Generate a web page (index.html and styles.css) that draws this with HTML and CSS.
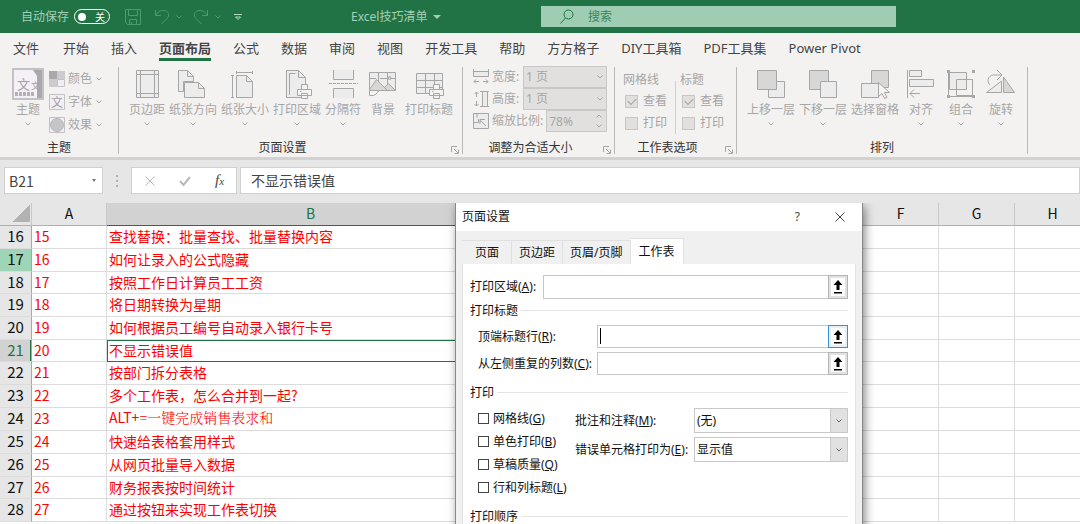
FILE: index.html
```html
<!DOCTYPE html>
<html lang="zh-CN">
<head>
  <meta charset="UTF-8">
  <meta name="viewport" content="width=device-width, initial-scale=1.0">
  <title>Excel技巧清单</title>
  <link rel="stylesheet" href="styles.css">
</head>
<body>
  <!-- shared icons -->
  <svg class="sprite" aria-hidden="true">
    <symbol id="chev" viewBox="0 0 8 6"><path d="M1.5 1.5 4 4 6.500 1.500"/></symbol>
    <symbol id="printer" viewBox="0 0 16 16"><path class="paper" d="M4.500 5.500V.500h6v5M.500 5.500h14v6h-14zM4.500 9.500h6v5h-6z"/><path d="M3 7.500h1.500"/></symbol>
    <symbol id="launch" viewBox="0 0 8 8"><path d="M.500 6V.500H6M3 3l4 4M7.500 3.500v4h-4"/></symbol>
    <symbol id="pick" viewBox="0 0 10 14"><path class="solid" d="M5 0 9.500 5H6.500v5h-3V5H.500zM1 12h8v1.500H1z"/></symbol>
  </svg>

  <header class="title-bar">
    <div class="quick-access">
      <span>自动保存</span>
      <button class="toggle" type="button"><i></i>关</button>
      <button class="quick" type="button" aria-label="保存"><svg width="16" height="16"><path d="M.500.500h15v15h-13l-2-2zM3.500.500v6h9v-6M4.500 15.500v-5h7v5M6.500 13v2"/></svg></button>
      <button class="quick" type="button" aria-label="撤消"><svg width="16" height="16"><path d="M1.500 1v5.500H7M1.500 6.500C4 3 6 1.500 9 1.500c6 0 7 5 4 8L7.500 15"/></svg><svg class="chev"><use href="#chev"/></svg></button>
      <button class="quick" type="button" aria-label="恢复"><svg width="16" height="16"><path d="M14.500 1v5.500H9M14.500 6.500C12 3 10 1.500 7 1.500c-6 0-7 5-4 8L8.500 15"/></svg><svg class="chev"><use href="#chev"/></svg></button>
      <button class="quick customize" type="button" aria-label="自定义"><svg width="8" height="8"><path d="M0 1.500h8M1.500 4 4 6.500 6.500 4z"/></svg></button>
    </div>
    <button class="file-name" type="button">Excel技巧清单<i></i></button>
    <label class="search">
      <svg width="14" height="15"><circle cx="8.500" cy="5.500" r="4.500"/><path d="M5.500 9 .500 14.500"/></svg>
      <input type="text" placeholder="搜索">
    </label>
  </header>

  <nav class="tabs">
    <a href="#">文件</a>
    <a href="#">开始</a>
    <a href="#">插入</a>
    <a href="#" class="active">页面布局</a>
    <a href="#">公式</a>
    <a href="#">数据</a>
    <a href="#">审阅</a>
    <a href="#">视图</a>
    <a href="#">开发工具</a>
    <a href="#">帮助</a>
    <a href="#">方方格子</a>
    <a href="#">DIY工具箱</a>
    <a href="#">PDF工具集</a>
    <a href="#">Power Pivot</a>
  </nav>

  <div class="ribbon">
    <section class="group theme-group">
      <div class="group-body">
        <button class="tool theme" type="button">
          <svg width="32" height="32"><path class="frame" d="M1 1h30v30H1z"/><path class="dark" d="M25 2h5v28h-5z"/><path class="dark" d="M21 2h4v6z"/><path class="dots" d="M3 26h20"/><text x="5" y="21" font-size="13">文</text><text x="19" y="21" font-size="9">文</text></svg>
          <span>主题</span><svg class="chev"><use href="#chev"/></svg>
        </button>
        <div class="small-tools">
          <button type="button"><svg width="16" height="16"><path class="dark" d="M0 0h8v8H0z"/><path class="fill-mid" d="M8 0h8v8H8zM0 8h8v8H0z"/><path class="lilac" d="M8.500 8.500h7v7h-7z"/></svg>颜色<svg class="chev"><use href="#chev"/></svg></button>
          <button type="button"><svg width="16" height="16"><path class="lilac" d="M.500.500h15v15H.500z"/><text x="2" y="13" font-size="12">文</text></svg>字体<svg class="chev"><use href="#chev"/></svg></button>
          <button type="button"><svg width="16" height="16"><path class="lilac" d="M.500.500h15v15H.500z"/><circle class="ball" cx="8" cy="8" r="6.500"/></svg>效果<svg class="chev"><use href="#chev"/></svg></button>
        </div>
      </div>
      <h2>主题</h2>
    </section>

    <section class="group setup-group">
      <div class="group-body">
        <button class="tool" type="button"><svg width="32" height="32"><path class="pale" d="M5.500 2.500h22v27h-22z"/><path d="M9.500 2v28M23.500 2v28M5 6.500h23M5 25.500h23"/></svg><span>页边距</span><svg class="chev"><use href="#chev"/></svg></button>
        <button class="tool" type="button"><svg width="32" height="32"><path class="pale" d="M6.500 23.500h-5v-21h9l6 6v5h-10z"/><path d="M10.500 2.500v6h6"/><path class="pale" d="M7.500 14.500h14l6 6v9h-20z"/><path d="M21.500 14.500v6h6"/></svg><span>纸张方向</span><svg class="chev"><use href="#chev"/></svg></button>
        <button class="tool" type="button"><svg width="32" height="32"><path class="pale" d="M7.500 7.500h10l6 6v16h-16z"/><path d="M17.500 7.500v6h6M7 4.500h17M7.500 3v3M23.500 3v3M3.500 7v23M2 7.500h3M2 29.500h3"/></svg><span>纸张大小</span><svg class="chev"><use href="#chev"/></svg></button>
        <button class="tool" type="button"><svg width="32" height="32"><path class="pale" d="M5.500 2.500h12l7 7v20h-19z"/><path d="M17.500 2.500v7h7M8.500 5v22M8.500 5.500h6"/><use href="#printer" x="16" y="16" width="16" height="16"/></svg><span>打印区域</span><svg class="chev"><use href="#chev"/></svg></button>
        <button class="tool" type="button"><svg width="32" height="32"><path class="pale" d="M6.500 2v9.500h20V2M6.500 30v-9.500h20V30"/><path class="dash" d="M2 15.500h29"/></svg><span>分隔符</span><svg class="chev"><use href="#chev"/></svg></button>
        <button class="tool" type="button"><svg width="32" height="32"><path class="pale" d="M2.500 4.500h26v18h-26z"/><path d="M11.500 4v9M20.500 4v12M2 10.500h7M13 10.500h16"/><circle class="mid" cx="22.500" cy="10" r="1.500"/><path class="mid" d="m2.500 21.500 7-10 11 11h-18zM17.500 19.500l4-4 7 7h-8z"/><path class="paper" d="M2.500 22.500h10c-2 0-2 4-6 5h-4z"/></svg><span>背景</span></button>
        <button class="tool" type="button"><svg width="32" height="32"><path class="pale" d="M3.500 5.500h26v20h-26z"/><path d="M3 12.500h27M3 19.500h27M12.500 5v21M21.500 5v21"/><use href="#printer" x="16" y="16" width="16" height="16"/></svg><span>打印标题</span></button>
      </div>
      <h2>页面设置</h2>
      <button class="launcher" type="button" aria-label="页面设置选项"><svg width="8" height="8"><use href="#launch"/></svg></button>
    </section>

    <section class="group scale-group">
      <div class="scale-rows">
        <div class="scale-row">
          <svg width="16" height="16"><path class="pale" d="M.500 2.500h15v5H.500z"/><path d="M.500 0v4M15.500 0v4M1 12.500h5M10 12.500h5M3 10.500l-2 2 2 2M13 10.500l2 2-2 2"/></svg>
          <label for="fit-width">宽度:</label>
          <span class="drop"><select id="fit-width" disabled><option>1 页</option></select><svg class="chev"><use href="#chev"/></svg></span>
        </div>
        <div class="scale-row">
          <svg width="16" height="16"><path class="pale" d="M9.500.500h5v15h-5z"/><path d="M7 .500h9M7 15.500h9M3.500 1v5M3.500 10v5M1.500 3l2-2 2 2M1.500 13l2 2 2-2"/></svg>
          <label for="fit-height">高度:</label>
          <span class="drop"><select id="fit-height" disabled><option>1 页</option></select><svg class="chev"><use href="#chev"/></svg></span>
        </div>
        <div class="scale-row">
          <svg width="16" height="16"><path class="pale" d="M.500.500h15v15H.500z"/><path d="M.500 9.500h5V6M4 .500v4M13 13 7 7M7 11V6.500h5"/></svg>
          <label for="scale">缩放比例:</label>
          <span class="drop"><input id="scale" type="text" value="78%" disabled><span class="spin"><svg class="chev up"><use href="#chev"/></svg><svg class="chev"><use href="#chev"/></svg></span></span>
        </div>
      </div>
      <h2>调整为合适大小</h2>
      <button class="launcher" type="button" aria-label="缩放选项"><svg width="8" height="8"><use href="#launch"/></svg></button>
    </section>

    <section class="group options-group">
      <div class="options">
        <fieldset>
          <legend>网格线</legend>
          <label><input type="checkbox" checked disabled>查看</label>
          <label><input type="checkbox" disabled>打印</label>
        </fieldset>
        <fieldset>
          <legend>标题</legend>
          <label><input type="checkbox" checked disabled>查看</label>
          <label><input type="checkbox" disabled>打印</label>
        </fieldset>
      </div>
      <h2>工作表选项</h2>
      <button class="launcher" type="button" aria-label="工作表选项"><svg width="8" height="8"><use href="#launch"/></svg></button>
    </section>

    <section class="group arrange-group">
      <div class="group-body">
        <button class="tool" type="button"><svg width="32" height="32"><path class="pale" d="M13.500 13.500h16v16h-16z"/><path class="mid" d="M2.500 2.500h19v19h-19z"/></svg><span>上移一层</span><svg class="chev"><use href="#chev"/></svg></button>
        <button class="tool" type="button"><svg width="32" height="32"><path class="mid" d="M2.500 2.500h19v19h-19z"/><path class="pale" d="M13.500 13.500h16v16h-16z"/></svg><span>下移一层</span><svg class="chev"><use href="#chev"/></svg></button>
        <button class="tool" type="button"><svg width="32" height="32"><path class="mid" d="M12.500 2.500h17v17h-17z"/><path class="pale" d="M2.500 15.500h17v14h-17z"/><path class="paper" d="M19.500 14.500v14l3.500-3 2.500 5 2.500-1-2.500-5h5z"/></svg><span>选择窗格</span></button>
        <button class="tool" type="button"><svg width="32" height="32"><path class="pale" d="M4.500 2.500h12v6h-12zM4.500 11.500h24v7h-24z"/><path d="M2.500 2v28M15 25.500H5M9 21.500l-4 4 4 4"/></svg><span>对齐</span><svg class="chev"><use href="#chev"/></svg></button>
        <button class="tool" type="button"><svg width="32" height="32"><path class="pale" d="M4.500 4.500h17v17h-17z"/><path d="M11.500 11.500h16v16h-16zM3.500 5v22M5 28.500h22"/><path class="dark" d="M2 2h3v3H2zM27 2h3v3h-3zM2 27h3v3H2zM27 27h3v3h-3z"/></svg><span>组合</span><svg class="chev"><use href="#chev"/></svg></button>
        <button class="tool" type="button"><svg width="32" height="32"><path d="M5 17c-5-5 0-11 5-10h6M12 2l5 5-5 5"/><path class="pale" d="M1.500 24.500h15V13z"/><path class="mid" d="M18.500 24.500h11L18.500 9z"/></svg><span>旋转</span><svg class="chev"><use href="#chev"/></svg></button>
      </div>
      <h2>排列</h2>
    </section>
  </div>

  <div class="formula-bar">
    <div class="name-box"><input type="text" value="B21" aria-label="名称框"><i></i></div>
    <div class="grip"><i></i><i></i><i></i></div>
    <div class="formula-buttons">
      <button type="button" aria-label="取消"><svg width="12" height="12"><path d="m1.500 1.500 9 9M10.500 1.500l-9 9"/></svg></button>
      <button type="button" aria-label="输入"><svg width="12" height="12"><path class="thick" d="m1 6 3.500 4L11 2"/></svg></button>
      <button class="fx" type="button">f<small>x</small></button>
    </div>
    <input class="formula" type="text" value="不显示错误值" aria-label="编辑栏">
  </div>

  <main class="workspace">
    <table class="sheet">
      <colgroup>
        <col class="w-head"><col class="w-a"><col class="w-b"><col class="w-c"><col class="w-c"><col class="w-c">
        <col class="w-f"><col class="w-f"><col class="w-f">
      </colgroup>
      <thead>
        <tr><th class="corner"><i></i></th><th>A</th><th class="current">B</th><th>C</th><th>D</th><th>E</th><th>F</th><th>G</th><th>H</th></tr>
      </thead>
      <tbody id="rows"></tbody>
    </table>

    <div class="dialog" role="dialog" aria-label="页面设置">
      <div class="dialog-title">
        <span>页面设置</span>
        <button type="button" aria-label="帮助">?</button>
        <button type="button" aria-label="关闭"><svg width="10" height="10"><path d="m.500.500 9 9M9.500.500l-9 9"/></svg></button>
      </div>
      <div class="dialog-tabs">
        <button type="button">页面</button>
        <button type="button">页边距</button>
        <button type="button">页眉/页脚</button>
        <button type="button" class="active">工作表</button>
      </div>
      <div class="panel">
        <div class="field">
          <label for="area">打印区域(<u>A</u>):</label>
          <span class="ref-box"><input id="area" type="text"><button type="button" aria-label="选择区域"><svg width="10" height="14"><use href="#pick"/></svg></button></span>
        </div>
        <h3>打印标题</h3>
        <div class="field inner">
          <label for="top-rows">顶端标题行(<u>R</u>):</label>
          <span class="ref-box focused"><b class="caret"></b><input id="top-rows" type="text"><button type="button" aria-label="选择行"><svg width="10" height="14"><use href="#pick"/></svg></button></span>
        </div>
        <div class="field inner">
          <label for="left-cols">从左侧重复的列数(<u>C</u>):</label>
          <span class="ref-box"><input id="left-cols" type="text"><button type="button" aria-label="选择列"><svg width="10" height="14"><use href="#pick"/></svg></button></span>
        </div>
        <h3 class="print-title">打印</h3>
        <div class="print">
          <div class="checks">
            <label><input type="checkbox">网格线(<u>G</u>)</label>
            <label><input type="checkbox">单色打印(<u>B</u>)</label>
            <label><input type="checkbox">草稿质量(<u>Q</u>)</label>
            <label><input type="checkbox">行和列标题(<u>L</u>)</label>
          </div>
          <div class="picks">
            <label for="notes">批注和注释(<u>M</u>):</label>
            <span class="drop"><select id="notes"><option>(无)</option></select><span class="arrow"><svg class="chev"><use href="#chev"/></svg></span></span>
            <label for="errors">错误单元格打印为(<u>E</u>):</label>
            <span class="drop"><select id="errors"><option>显示值</option></select><span class="arrow"><svg class="chev"><use href="#chev"/></svg></span></span>
          </div>
        </div>
        <h3>打印顺序</h3>
      </div>
    </div>
  </main>

  <script>
    const tips = [
      '查找替换：批量查找、批量替换内容',
      '如何让录入的公式隐藏',
      '按照工作日计算员工工资',
      '将日期转换为星期',
      '如何根据员工编号自动录入银行卡号',
      '不显示错误值',
      '按部门拆分表格',
      '多个工作表，怎么合并到一起?',
      'ALT+<span class="song">=一键完成销售表求和</span>',
      '快速给表格套用样式',
      '从网页批量导入数据',
      '财务报表按时间统计',
      '通过按钮来实现工作表切换'
    ];
    const firstRow = 16;
    const state = { 17: 'marked', 21: 'current' };

    document.getElementById('rows').innerHTML = tips.map((tip, i) => {
      const row = firstRow + i;
      return `<tr class="${state[row] || ''}"><th>${row}</th><td>${row - 1}</td><td>${tip}</td>${'<td></td>'.repeat(6)}</tr>`;
    }).join('');
  </script>
</body>
</html>
```
FILE: styles.css
```css
* {
  box-sizing: border-box;
}
body {
  margin: 0;
  height: 100vh;
  display: flex;
  flex-direction: column;
  overflow: hidden;
  background: #fff;
  color: #444;
  font-family: "Noto Sans", "Noto Sans CJK SC", sans-serif;
  font-size: 12px;
  line-height: 16px;
}
button, input, select {
  font: inherit;
  color: inherit;
  margin: 0;
  padding: 0;
  border: 0;
  background: none;
  border-radius: 0;
}
input, select {
  appearance: none;
  min-width: 0;
  outline: 0;
}
svg {
  display: block;
  flex: none;
  fill: none;
  stroke: currentColor;
}
svg text {
  fill: #a3a0a3;
  stroke: none;
}
.sprite {
  position: absolute;
  width: 0;
  height: 0;
}
.chev {
  width: 8px;
  height: 6px;
}
.up {
  transform: rotate(180deg);
}
.solid {
  fill: currentColor;
  stroke: none;
}
.pale { fill: #ececec; }
.paper { fill: #f5f4f3; }
.mid { fill: #d8d7d8; }
.fill-mid { fill: #cdcbcf; stroke: none; }
.ball { fill: #c6c5c8; stroke: #b8b6ba; }
.lilac { fill: #f2eff4; stroke: #c4c0c6; }
.frame { fill: #f5f0f7; stroke: #c4c0c6; stroke-width: 2; }
.dark { fill: #aaa8ab; stroke: none; }
.dots { stroke: #b4b1b6; stroke-width: 4; stroke-dasharray: 3 1; }
.dash { stroke-dasharray: 3 1; }

/* title bar */
.title-bar {
  flex: none;
  height: 33px;
  display: flex;
  align-items: center;
  background: #217346;
  color: #a3cfb6;
}
.quick-access {
  flex: none;
  width: 351px;
  padding-left: 21px;
  display: flex;
  align-items: center;
}
.toggle {
  width: 36px;
  height: 15px;
  margin: 0 15px 0 5px;
  padding: 0 4px 0 3px;
  display: flex;
  align-items: center;
  justify-content: space-between;
  border: 1px solid #fff;
  border-radius: 8px;
  color: #fff;
  font-size: 10px;
  line-height: 12px;
}
.toggle i {
  width: 8px;
  height: 8px;
  border-radius: 50%;
  background: #fff;
}
.quick {
  display: flex;
  align-items: center;
  gap: 5px;
  margin-right: 13px;
  color: #4c9a6d;
}
.quick + .quick {
  margin-right: 10px;
}
.customize {
  color: #b5d9c4;
  margin-left: 2px;
}
.file-name {
  flex: none;
  width: 190px;
  display: flex;
  align-items: center;
  gap: 6px;
}
.file-name i {
  border: 4px solid transparent;
  border-top-color: #a3cfb6;
  border-bottom: 0;
}
.search {
  flex: 0 1 355px;
  height: 21px;
  padding-left: 19px;
  display: flex;
  align-items: center;
  gap: 14px;
  background: #9fcdb3;
  color: #217346;
}
.search input {
  flex: 1;
}
.search input::placeholder {
  color: #3b855b;
  opacity: 1;
}

/* ribbon */
.tabs {
  flex: none;
  height: 28px;
  padding-left: 13px;
  display: flex;
  gap: 22px;
  background: #f3f2f1;
  font-size: 13px;
  white-space: nowrap;
}
.tabs a {
  height: 28px;
  line-height: 30px;
  color: #444;
  text-decoration: none;
}
.tabs a:first-child {
  margin-right: 2px;
}
.tabs .active {
  font-weight: bold;
  border-bottom: 3px solid #217346;
}
.ribbon {
  flex: none;
  height: 99px;
  display: flex;
  background: #f3f2f1;
  border-bottom: 3px solid #d2d2d2;
  color: #a6a6a6;
}
.group {
  flex: none;
  position: relative;
  height: 87px;
  margin-top: 6px;
  display: flex;
  flex-direction: column;
  justify-content: space-between;
  border-right: 1px solid #b9b9b9;
}
.theme-group { width: 119px; }
.setup-group { width: 344px; }
.scale-group { width: 152px; }
.options-group { width: 122px; }
.arrange-group { width: 291px; }
.group h2 {
  margin: 0;
  text-align: center;
  font-size: 12px;
  line-height: 12px;
  font-weight: normal;
  color: #333;
}
.setup-group h2, .scale-group h2, .options-group h2 {
  padding-right: 16px;
}
.group-body {
  display: flex;
  padding: 1px 0 0 8px;
}
.tool {
  min-width: 40px;
  padding: 0 2px;
  display: flex;
  flex-direction: column;
  align-items: center;
  white-space: nowrap;
}
.tool > span {
  margin: 2px 0 3px;
}
.theme-group .tool {
  min-width: 42px;
  margin-left: -1px;
}
.small-tools {
  margin-top: -1px;
}
.small-tools button {
  height: 23px;
  display: flex;
  align-items: center;
  gap: 3px;
}
.launcher {
  position: absolute;
  right: 3px;
  bottom: 0;
}
.scale-rows {
  margin-top: -1px;
}
.scale-row {
  height: 22px;
  padding: 0 7px 0 10px;
  display: flex;
  align-items: center;
  gap: 3px;
  white-space: nowrap;
}
.drop {
  position: relative;
  display: flex;
}
.drop > .chev {
  position: absolute;
  right: 3px;
  top: 8px;
}
.scale-row .drop {
  width: 84px;
  margin-left: auto;
}
.scale-row:last-child .drop {
  width: 62px;
}
.scale-row select, .scale-row input {
  width: 100%;
  height: 22px;
  padding: 0 2px;
  border: 1px solid #c8c8c8;
  background: #e1e0df;
  color: #a6a6a6;
  opacity: 1;
}
.spin {
  position: absolute;
  right: 4px;
  top: 3px;
  display: grid;
  gap: 4px;
}
.options {
  display: flex;
  padding: 4px 0 0 8px;
}
.options fieldset {
  width: 53px;
  margin: 0;
  padding: 0;
  border: 0;
  border-right: 1px solid #d0d0d0;
}
.options fieldset + fieldset {
  padding-left: 4px;
  border: 0;
}
.options legend {
  padding: 0 0 2px;
  line-height: 17px;
}
.options label {
  height: 22px;
  padding-left: 2px;
  display: flex;
  align-items: center;
  gap: 5px;
  white-space: nowrap;
}
.options input {
  flex: none;
  width: 13px;
  height: 13px;
  display: grid;
  place-items: center;
  border: 1px solid #c6c6c6;
  background: #e1e0df;
}
.options input:checked::before {
  content: "";
  width: 7px;
  height: 4px;
  margin-bottom: 2px;
  border: solid #a0a0a0;
  border-width: 0 0 1px 1px;
  transform: rotate(-45deg);
}

/* formula bar */
.formula-bar {
  flex: none;
  height: 43px;
  padding: 7px 0 9px 4px;
  display: flex;
  background: #e6e6e6;
  font-family: "Noto Sans CJK SC", sans-serif;
  font-size: 14px;
}
.name-box, .formula-buttons, .formula {
  background: #fff;
  border: 1px solid #d0d0d0;
}
.name-box {
  width: 99px;
  padding: 0 6px 0 4px;
  display: flex;
  align-items: center;
}
.name-box input {
  flex: 1;
}
.name-box i {
  border: 2px solid transparent;
  border-top: 3px solid #777;
  border-bottom: 0;
}
.grip {
  width: 28px;
  display: grid;
  place-content: center;
  gap: 3px;
}
.grip i {
  width: 2px;
  height: 2px;
  background: #b0b0b0;
}
.formula-buttons {
  width: 106px;
  display: flex;
  align-items: center;
  justify-content: space-around;
  color: #b8b8b8;
}
.thick {
  stroke-width: 2;
}
.fx {
  font: italic 15px/20px "Liberation Serif", serif;
  color: #444;
}
.fx small {
  font-size: 11px;
}
.formula {
  flex: 1;
  margin-left: 3px;
  padding: 0 0 2px 10px;
}

/* sheet */
.workspace {
  flex: 1;
  min-height: 0;
  position: relative;
  overflow: hidden;
}
.sheet {
  width: 0;
  table-layout: fixed;
  border-collapse: separate;
  border-spacing: 0;
  font: 14px/18px "Noto Sans CJK SC", sans-serif;
}
.w-head { width: 32px; }
.w-a { width: 75px; }
.w-b { width: 408px; }
.w-c { width: 116px; }
.w-f { width: 76px; }
.sheet th, .sheet td {
  height: 23px;
  padding: 0 0 2px;
  border-right: 1px solid #dcdcdc;
  border-bottom: 1px solid #dcdcdc;
  white-space: nowrap;
}
.sheet tbody tr:nth-child(3n) > * {
  height: 22px;
}
.sheet th {
  background: #e6e6e6;
  color: #111;
  font-weight: normal;
}
.sheet thead th {
  border-right-color: #c8c8c8;
  border-bottom-color: #b0b0b0;
}
.sheet thead .current {
  background: #d2d2d2;
  border-bottom-color: #217346;
  color: #217346;
}
.corner i {
  display: block;
  width: 18px;
  height: 18px;
  margin-left: 12px;
  background: linear-gradient(135deg, transparent 50%, #b2b2b2 50%);
}
.sheet tbody th {
  border-right-color: #a8a8a8;
  font-size: 15px;
}
.sheet tbody td {
  padding-left: 2px;
  color: #f00;
}
.sheet .marked th {
  background: #9fd5b7;
}
.sheet .current th {
  background: #d2d2d2;
  color: #217346;
  box-shadow: inset -1px 0 #217346;
}
.sheet .current td:nth-child(3) {
  box-shadow: inset 1px 1px #217346;
  border-bottom-color: #217346;
}
.song {
  font-family: "Liberation Serif", "Noto Serif CJK SC", "Noto Sans CJK SC", serif;
  font-weight: 300;
}

/* page setup dialog */
.dialog {
  position: absolute;
  left: 456px;
  top: 0;
  width: 406px;
  height: 560px;
  padding: 0 6px;
  background: #f0f0f0;
  color: #111;
  outline: 1px solid #8a8a8a;
  box-shadow: 2px 3px 10px rgba(0, 0, 0, 0.55);
}
.dialog-title {
  height: 28px;
  margin: 0 -6px;
  padding: 0 17px 0 6px;
  display: flex;
  align-items: center;
  gap: 35px;
  background: #fff;
}
.dialog-title span {
  flex: 1;
}
.dialog-title button {
  color: #444;
}
.dialog-tabs {
  height: 33px;
  padding-top: 7px;
  display: flex;
  align-items: flex-end;
}
.dialog-tabs button {
  height: 24px;
  padding: 0 7px;
  border: 1px solid #e0e0e0;
  border-width: 1px 1px 0 0;
}
.dialog-tabs button:first-child {
  padding: 0 12px 0 13px;
}
.dialog-tabs .active {
  height: 26px;
  padding: 0 8px;
  background: #fff;
}
.panel {
  height: 520px;
  padding: 11px 7px 0;
  background: #fff;
  border: 1px solid #e2e2e2;
  border-top: 0;
}
.field {
  display: flex;
  align-items: center;
  height: 24px;
}
.field label {
  flex: 1;
}
.inner {
  height: 23px;
  margin-bottom: 4px;
  padding-left: 8px;
}
.ref-box {
  position: relative;
  width: 305px;
  height: 100%;
  display: flex;
  border: 1px solid #c6c6c6;
}
.inner .ref-box {
  width: 251px;
}
.ref-box input {
  flex: 1;
}
.ref-box button {
  width: 20px;
  margin: -1px;
  display: grid;
  place-items: center;
  border: 1px solid #b4b4b4;
  box-shadow: inset 0 0 0 2px #e2e2e2;
  color: #000;
}
.focused button {
  border-color: #3b8ed0;
  box-shadow: inset 0 0 0 2px #e3f0fa;
}
.caret {
  position: absolute;
  left: 2px;
  top: 2px;
  width: 1px;
  height: 16px;
  background: #000;
}
.panel h3 {
  height: 26px;
  margin: 0;
  display: flex;
  align-items: center;
  gap: 3px;
  padding-bottom: 3px;
  font-size: 12px;
  font-weight: normal;
}
.panel h3::after {
  content: "";
  flex: 1;
  border-top: 1px solid #e4e4e4;
}
.panel .print-title {
  margin-top: 6px;
}
.print {
  display: flex;
  justify-content: space-between;
  height: 98px;
  padding-left: 8px;
}
.checks label {
  height: 23px;
  display: flex;
  align-items: center;
}
.checks input {
  width: 11px;
  height: 11px;
  margin-right: 4px;
  border: 1px solid #444;
  background: #fff;
}
.picks {
  display: grid;
  grid-template-columns: 119px 154px;
  grid-auto-rows: 25px;
  align-content: start;
  gap: 4px 0;
  align-items: center;
  padding-top: 1px;
  white-space: nowrap;
}
.picks select {
  width: 154px;
  height: 25px;
  padding-left: 2px;
  border: 1px solid #c8c8c8;
}
.arrow {
  position: absolute;
  right: 0;
  top: 0;
  width: 18px;
  height: 25px;
  display: grid;
  place-items: center;
  border: 1px solid #c8c8c8;
  background: #e1e1e1;
  color: #666;
  pointer-events: none;
}
```
